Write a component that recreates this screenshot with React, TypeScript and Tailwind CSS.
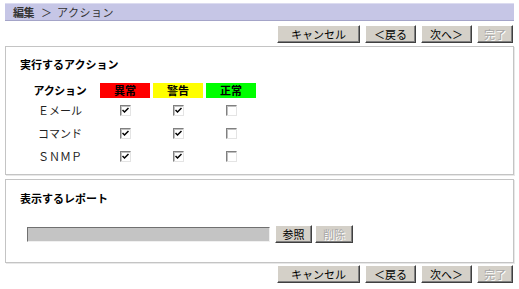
import React from "react";

const font = { fontFamily: '"Noto Sans CJK JP", "Noto Sans", sans-serif' };

function Btn({ w, children, disabled }: { w: string; children: React.ReactNode; disabled?: boolean }) {
  return (
    <div
      className={`${w} h-[18px] flex items-center justify-center whitespace-nowrap bg-[#d4d0c8] border border-t-white border-l-white border-r-[#404040] border-b-[#404040] shadow-[inset_-1px_-1px_0_#808080] text-[11px] leading-none ${
        disabled ? "text-[#a8a8a8] [text-shadow:1px_1px_0_#ffffff]" : "text-black"
      }`}
    >
      {children}
    </div>
  );
}

function ButtonRow() {
  return (
    <div className="flex justify-end pr-[1px]">
      <Btn w="w-[83px]">キャンセル</Btn>
      <div className="ml-[5px]">
        <Btn w="w-[51px]">＜戻る</Btn>
      </div>
      <div className="ml-[5px]">
        <Btn w="w-[51px]">次へ＞</Btn>
      </div>
      <div className="ml-[5px]">
        <Btn w="w-[36px]" disabled>
          完了
        </Btn>
      </div>
    </div>
  );
}

function Check({ on }: { on: boolean }) {
  return (
    <div className="w-[11px] h-[11px] bg-white border border-t-[#808080] border-l-[#808080] border-b-[#e4e4e4] border-r-[#e4e4e4] shadow-[inset_1px_1px_0_#c0c0c0] flex items-center justify-center">
      {on && (
        <svg width="7" height="7" viewBox="0 0 7 7">
          <path d="M0.5 3 L2.5 5 L6.5 1" stroke="#000" strokeWidth="1.5" fill="none" />
        </svg>
      )}
    </div>
  );
}

function Row({ label, a, b, c }: { label: string; a: boolean; b: boolean; c: boolean }) {
  return (
    <div className="flex items-center h-[23px]">
      <div className="w-[54px] flex justify-center whitespace-nowrap text-[11px] text-[#222]">{label}</div>
      <div className="ml-[13px] w-[50px] flex justify-center">
        <Check on={a} />
      </div>
      <div className="ml-[3px] w-[50px] flex justify-center">
        <Check on={b} />
      </div>
      <div className="ml-[3px] w-[50px] flex justify-center">
        <Check on={c} />
      </div>
    </div>
  );
}

export default function App() {
  return (
    <div style={font} className="w-[519px] h-[289px] bg-white px-[5px] pt-[3px] overflow-hidden">
      <div className="h-[18px] bg-[#c6c6e6] border-t border-b border-t-[#dcdcf0] border-b-[#a4a4c8] flex items-center pl-[8px] text-[11px] text-[#333] whitespace-nowrap">
        <span className="font-bold tracking-[-0.5px]">編集</span>
        <span className="ml-[7px]">＞</span>
        <span className="ml-[5px] tracking-[0.5px]">アクション</span>
      </div>
      <div className="mt-[4px]">
        <ButtonRow />
      </div>
      <div className="mt-[3px] h-[129px] border border-[#c4c4c4] shadow-[1px_1px_0_#e8e8e8] pl-[14px] pt-[11px]">
        <div className="text-[11px] font-bold leading-[13px] text-black whitespace-nowrap">実行するアクション</div>
        <div className="mt-[11px] ml-[13px]">
          <div className="flex items-center h-[16px]">
            <div className="w-[54px] flex justify-center whitespace-nowrap text-[11px] font-bold text-black tracking-[-0.3px]">
              アクション
            </div>
            <div className="ml-[13px] w-[50px] h-[15px] bg-[#ff0000] flex items-center justify-center text-[11px] font-bold text-black">
              異常
            </div>
            <div className="ml-[3px] w-[50px] h-[15px] bg-[#ffff00] flex items-center justify-center text-[11px] font-bold text-black">
              警告
            </div>
            <div className="ml-[3px] w-[50px] h-[15px] bg-[#00ff00] flex items-center justify-center text-[11px] font-bold text-black">
              正常
            </div>
          </div>
          <div className="mt-[1px]">
            <Row label="Ｅメール" a b c={false} />
            <Row label="コマンド" a b c={false} />
            <Row label="ＳＮＭＰ" a b c={false} />
          </div>
        </div>
      </div>
      <div className="mt-[4px] h-[84px] border border-[#c4c4c4] shadow-[1px_1px_0_#e8e8e8] pt-[12px]">
        <div className="pl-[14px] text-[11px] font-bold leading-[13px] text-black whitespace-nowrap">表示するレポート</div>
        <div className="mt-[20px] ml-[21px] flex items-center">
          <div className="w-[243px] h-[15px] bg-[#c4c4c4] border border-t-[#707070] border-l-[#707070] border-b-[#f0f0f0] border-r-[#f0f0f0]" />
          <div className="ml-[5px]">
            <Btn w="w-[37px]">参照</Btn>
          </div>
          <div className="ml-[3px]">
            <Btn w="w-[38px]" disabled>
              削除
            </Btn>
          </div>
        </div>
      </div>
      <div className="mt-[2px]">
        <ButtonRow />
      </div>
    </div>
  );
}
